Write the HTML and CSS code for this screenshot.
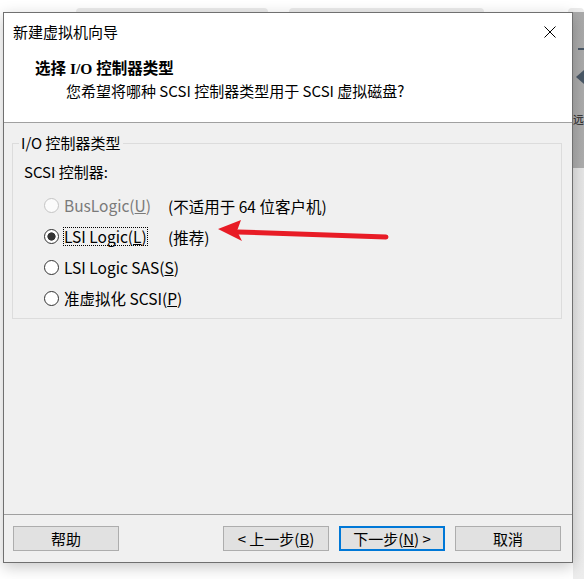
FILE: index.html
```html
<!DOCTYPE html>
<html lang="zh-CN">
<head>
    <meta charset="utf-8">
    <link rel="stylesheet" href="styles.css">
</head>
<body>
    <div class="backdrop">
        <div class="tab tab-a"></div>
        <div class="tab tab-b"></div>
        <div class="tab tab-c"></div>
    </div>

    <div class="desk">
        <div class="wizard">
            <div class="header">
                <div class="titlebar">
                    <span class="title">新建虚拟机向导</span>
                    <span class="close">
                        <svg width="12" height="12" viewBox="0 0 12 12">
                            <path d="M0.5 0.5 L11.5 11.5 M11.5 0.5 L0.5 11.5" stroke="#000" stroke-width="1" fill="none"/>
                        </svg>
                    </span>
                </div>
                <div class="heading">选择 I/O 控制器类型</div>
                <div class="subheading">您希望将哪种 SCSI 控制器类型用于 SCSI 虚拟磁盘?</div>
            </div>

            <div class="content">
                <fieldset class="group">
                    <legend>I/O 控制器类型</legend>
                    <div class="group-label">SCSI 控制器:</div>
                    <div class="options">
                        <div class="row">
                            <label class="option disabled"><input type="radio" name="ctrl" disabled><span class="text">BusLogic(<u>U</u>)</span></label>
                            <span class="note">(不适用于 64 位客户机)</span>
                        </div>
                        <div class="row">
                            <label class="option focus"><input type="radio" name="ctrl" checked><span class="text">LSI Logic(<u>L</u>)</span></label>
                            <span class="note">(推荐)</span>
                        </div>
                        <div class="row">
                            <label class="option"><input type="radio" name="ctrl"><span class="text">LSI Logic SAS(<u>S</u>)</span></label>
                        </div>
                        <div class="row">
                            <label class="option"><input type="radio" name="ctrl"><span class="text">准虚拟化 SCSI(<u>P</u>)</span></label>
                        </div>
                    </div>
                </fieldset>

                <!-- red annotation arrow drawn over the dialog -->
                <svg class="arrow" width="185" height="35" viewBox="0 0 185 35">
                    <line x1="28" y1="17" x2="176" y2="22" stroke="#e81c26" stroke-width="5" stroke-linecap="round"/>
                    <path d="M8 14 L31 5 L27 16 L32 26 Z" fill="#e81c26"/>
                </svg>
            </div>

            <div class="footer">
                <button class="btn">帮助</button>
                <button class="btn push">&lt; 上一步(<u>B</u>)</button>
                <button class="btn default">下一步(<u>N</u>) &gt;</button>
                <button class="btn">取消</button>
            </div>
        </div>

        <div class="behind">
            <div class="bar"></div>
            <div class="tri"></div>
            <div class="glyph">远</div>
        </div>
    </div>
</body>
</html>
```

FILE: styles.css
```css
body {
    margin: 0;
    width: 584px;
    height: 579px;
    overflow: hidden;
    background: #ffffff;
    font-family: "Noto Sans CJK SC", sans-serif;
    font-size: 15px;
    color: #000;
}

.backdrop {
    height: 12px;
    display: flex;
    align-items: flex-end;
}

.tab {
    height: 4px;
    background: #ebebeb;
    border-radius: 4px 4px 0 0;
}

.tab-a {
    margin-left: 76px;
    width: 192px;
}

.tab-b {
    margin-left: 21px;
    width: 195px;
}

.tab-c {
    margin-left: 84px;
    flex: 1;
}

.desk {
    display: flex;
    align-items: flex-start;
}

.wizard {
    position: relative;
    z-index: 1;
    margin-left: 3px;
    width: 570px;
    height: 551px;
    flex: none;
    box-sizing: border-box;
    border: 1px solid #707070;
    display: flex;
    flex-direction: column;
    background: #f0f0f0;
    box-shadow: 0 4px 14px rgba(0, 0, 0, 0.22);
}

.header {
    height: 109px;
    background: #ffffff;
    border-bottom: 1px solid #a0a0a0;
}

.titlebar {
    height: 37px;
    display: flex;
    align-items: center;
    justify-content: space-between;
    padding-left: 9px;
}

.title {
    line-height: 20px;
}

.close {
    width: 44px;
    height: 37px;
    display: flex;
    align-items: center;
    justify-content: center;
}

.heading {
    margin-top: 9px;
    padding-left: 31px;
    line-height: 20px;
    font-family: "Liberation Serif", "Noto Sans CJK SC", serif;
    font-weight: bold;
    font-size: 15.5px;
}

.subheading {
    margin-top: 2px;
    padding-left: 62px;
    line-height: 20px;
}

.content {
    flex: 1;
    position: relative;
}

.group {
    margin: 11px 10px 0 8px;
    padding: 0 10px 4px 11px;
    border: 1px solid #dcdcdc;
}

.group legend {
    margin-left: -5px;
    padding: 0 2px;
    line-height: 18px;
}

.group-label {
    margin-top: 10px;
    line-height: 20px;
}

.options {
    margin-top: 8px;
    padding-left: 20px;
}

.row {
    height: 31px;
    display: flex;
    align-items: center;
}

.option {
    min-width: 124px;
    flex: none;
    display: flex;
    align-items: center;
}

.option input {
    appearance: none;
    -webkit-appearance: none;
    flex: none;
    box-sizing: border-box;
    width: 15px;
    height: 15px;
    margin: 0 4px 0 0;
    border: 1px solid #333333;
    border-radius: 50%;
    background: #ffffff;
}

.option input:checked {
    background: radial-gradient(circle, #333333 0 3.8px, #ffffff 4.4px);
}

.option.disabled input {
    border-color: #c4c4c4;
    background: #fbfbfb;
}

.option .text {
    border: 1px dotted transparent;
    line-height: 17px;
    white-space: nowrap;
    font-size: 15.5px;
}

.option.focus .text {
    border-color: #000;
}

.option.disabled .text {
    color: #7a7a7a;
}

.note {
    white-space: nowrap;
    font-size: 15.5px;
}

.arrow {
    position: absolute;
    left: 206px;
    top: 92px;
}

.footer {
    border-top: 1px solid #a0a0a0;
    padding: 11px 11px 11px 9px;
    display: flex;
    gap: 10px;
}

.btn {
    width: 106px;
    height: 25px;
    box-sizing: border-box;
    border: 1px solid #adadad;
    background: #e1e1e1;
    font-family: inherit;
    font-size: 15px;
    color: #000;
    padding: 0;
    line-height: 20px;
}

.btn.push {
    margin-left: auto;
}

.btn.default {
    border: 2px solid #0078d7;
}

.behind {
    flex: 1;
    height: 567px;
    overflow: hidden;
    background: linear-gradient(#a9a9a9 0, #adadad 156px, #e6e6e6 156px, #ededed 100%);
    display: flex;
    flex-direction: column;
}

.bar {
    margin: 36px 0 0 5px;
    height: 2px;
    background: #4a5866;
}

.tri {
    margin: 20px 0 0 3px;
    width: 0;
    height: 0;
    border-right: 8px solid #4a5866;
    border-top: 7px solid transparent;
    border-bottom: 7px solid transparent;
}

.glyph {
    margin: 28px 0 0 0;
    font-size: 11px;
    line-height: 14px;
    color: #222;
}
```
